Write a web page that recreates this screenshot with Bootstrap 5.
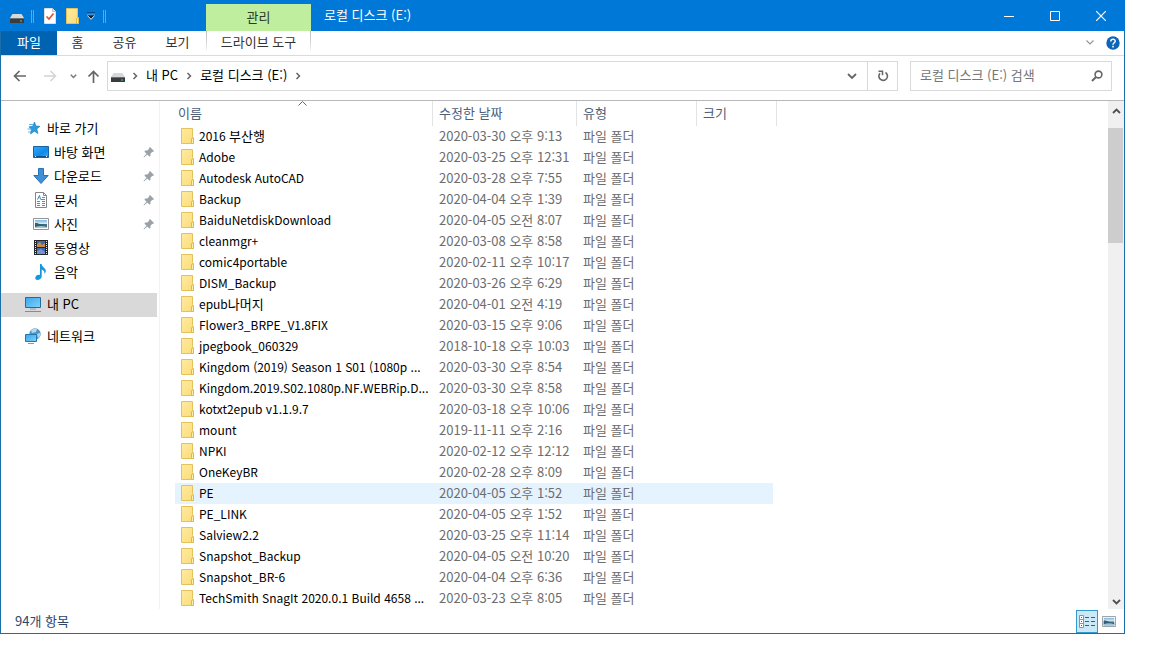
<!DOCTYPE html>
<html lang="ko">
<head>
<meta charset="utf-8">
<meta name="viewport" content="width=device-width, initial-scale=1">
<title>로컬 디스크 (E:)</title>
<link href="https://cdn.jsdelivr.net/npm/bootstrap@5.3.0/dist/css/bootstrap.min.css" rel="stylesheet">
<style>
body { font-family: "Noto Sans CJK KR", sans-serif; font-size: 13px; line-height: 20px; color: #000; background: #fff; }
button, input { font: inherit; }
button { background: none; border: 0; padding: 0; color: inherit; }
svg { display: block; flex: none; }
.explorer { margin-right: 27px; border: 1px solid #1a6fa8; border-top: 0; }
.titlebar { height: 31px; margin: 0 -1px; padding-left: 10px; background: #0078d7; color: #fff; }
.quick { width: 196px; height: 31px; padding-top: 1px; }
.sep { width: 3px; height: 13px; border: solid #5fa9e3; border-width: 0 1px; }
.tool-head { width: 105px; height: 27px; padding-bottom: 2px; background: #bfee9f; color: #2b3b25; }
.window-title { padding: 0 0 2px 13px; }
.caption-btn { width: 46px; height: 31px; }
.caption-btn:last-child { margin-right: 1px; }
.ribbon { height: 25px; border-bottom: 1px solid #dadbdc; color: #333; }
.ribbon button { height: 24px; padding-bottom: 2px; }
.tab-file { width: 56px; background: #0063b1; color: #fff; }
.tab-home { width: 41px; }
.tab-std { width: 53px; }
.tab-tool { width: 105px; margin-left: 2px; border: 1px solid; border-width: 0 1px !important; border-image: linear-gradient(#bbb, #ddd 60%, #fff 85%) 1; }
.navrow { height: 45px; padding: 5px 12px 9px 12px; border-bottom: 1px solid #b8b8b8; }
.navbtns { width: 94px; }
.boxed { height: 30px; border: 1px solid #d9d9d9; }
.crumb { padding: 0 8px 2px; }
.crumb-end { width: 30px; height: 28px; }
.crumb-end + .crumb-end { border-left: 1px solid #d9d9d9; }
.searchbox { width: 202px; margin-left: 12px; padding: 0 8px 0 9px; }
.searchbox input { border: 0; outline: 0; padding: 0 0 2px; min-width: 0; background: none; }
.searchbox input::placeholder { color: #767676; opacity: 1; }
.sidebar { width: 159px; border-right: 1px solid #f2f2f2; padding-top: 16px; }
.side-link { display: flex; align-items: center; height: 24px; margin-right: 2px; padding: 0 2px 2px 24px; gap: 6px; color: #000; text-decoration: none; }
.side-link.sub { padding-left: 32px; gap: 5px; }
.side-link.current { background: #d9d9d9; }
.group-gap { margin-top: 8px; }
.files { width: 602px; margin: 0 0 0 15px; table-layout: fixed; border-collapse: separate; border-spacing: 0; }
.files th { height: 25px; padding: 0 0 1px 6px; font-weight: 400; color: #4c607a; border-right: 1px solid #e3e3e3; vertical-align: middle; }
.files th:first-child { padding-left: 3px; position: relative; }
.sort-mark { position: absolute; top: 0; left: 123px; }
.files td { height: 21px; padding: 0 0 2px 6px; color: #6d6d6d; line-height: 18px; white-space: nowrap; }
.files td:first-child { color: #000; font-size: 12px; }
.hangul { font-size: 13px; }
.files td:last-child { border-right: 4px solid transparent; background-clip: padding-box; }
.files tr.hot td { background-color: #e5f3ff; }
.scrollbar { width: 16px; background: #f0f0f0; color: #505050; }
.scroll-up { height: 20px; }
.scroll-down { height: 15px; }
.thumb { height: 115px; margin-top: 7px; background: #cdcdcd; margin-right: 1px; }
.status { height: 24px; color: #2c4668; padding-left: 14px; }
.view-btn { width: 22px; height: 23px; }
.view-btn.active { border: 1px solid #3399cc; background: #cbe8f6; }
</style>
</head>
<body>
<svg width="0" height="0" class="position-absolute" aria-hidden="true">
  <defs>
    <linearGradient id="gFold" x2="1" y2="1"><stop stop-color="#ffeaa0"/><stop offset="1" stop-color="#fbdc78"/></linearGradient>
    <linearGradient id="gBlue" x2="1" y2="1"><stop stop-color="#35a8f5"/><stop offset=".6" stop-color="#1089e8"/><stop offset="1" stop-color="#35b0ff"/></linearGradient>
    <linearGradient id="gScr" x2="1" y2="1"><stop stop-color="#3ba6ea"/><stop offset="1" stop-color="#7fd2fb"/></linearGradient>
    <linearGradient id="gPhoto" x2="0" y2="1"><stop stop-color="#7fb4dc"/><stop offset=".45" stop-color="#d9ecf5"/><stop offset=".55" stop-color="#3c6b7c"/><stop offset="1" stop-color="#79a6bd"/></linearGradient>
  </defs>
  <symbol id="folder" viewBox="0 0 13 16"><path d="M.5.5h11v8l1 1v6H.5z" fill="url(#gFold)" stroke="#e3c25e"/><path d="M10.500 15.500v-4.500l1-1.500 1 1.500v4.500z" fill="#fff0a8" stroke="#dfb84c"/></symbol>
  <symbol id="drive" viewBox="0 0 14 9"><path d="M2.500 0h9L14 4H0z" fill="#d6d9dc"/><path d="M0 4h14v5H0z" fill="#3a3d40"/><path d="M0 4h14v1H0z" fill="#6d7174"/><path d="M10 6.500h2v1h-2z" fill="#3de06a"/></symbol>
  <symbol id="chev" viewBox="0 0 6 8"><path d="M1.500 1 4.500 4 1.500 7" fill="none" stroke="#666" stroke-width="1.500"/></symbol>
  <symbol id="pin" viewBox="0 0 12 12"><path d="M7 1 11 5 10 6 9.300 5.800 7.500 7.800 7.400 10 6.300 10.500 4.300 8.500 1 11.500.5 11 3.500 7.700 1.500 5.700 2 4.600 4.200 4.500 6.200 2.700 6 2z" fill="#9aa1a8"/></symbol>
  <symbol id="photo" viewBox="0 0 16 12"><path d="M.5.500h15v11H.5z" fill="#fff" stroke="#8f9599"/><path d="M2 2h12v8H2z" fill="url(#gPhoto)"/><path d="M2 5c4 0 6 2 12 3v2H2z" fill="#355e70"/><path d="M2 9q6-2 12 0v1H2z" fill="#9cc7d8"/></symbol>
</svg>

<div class="explorer">
  <header class="titlebar d-flex align-items-end">
    <div class="quick d-flex align-items-center">
      <svg width="14" height="9" class="mt-1"><use href="#drive"/></svg>
      <span class="sep" style="margin-left:7px"></span>
      <button type="button" aria-label="속성" style="margin-left:10px"><svg width="12" height="16" viewBox="0 0 12 16"><path d="M.5.500h8l3 3v12H.5z" fill="#fff" stroke="#d9dfe6"/><path d="M8.500.500v3h3" fill="#dfe5ea" stroke="#b9c2ca"/><path d="M2.500 8.500 5 11l4.500-5.500" fill="none" stroke="#e0532b" stroke-width="1.700"/></svg></button>
      <button type="button" aria-label="새 폴더" style="margin-left:10px"><svg width="13" height="16"><use href="#folder"/></svg></button>
      <button type="button" class="ms-2" aria-label="빠른 실행 도구 모음 사용자 지정"><svg width="8" height="8" viewBox="0 0 8 8"><path d="M0 1h8" stroke="#0b1c2e"/><path d="M0 2h8" stroke="#9fccee" stroke-width=".7"/><path d="M0 3.500h8L4 7.800z" fill="#fff"/><path d="M.6 3.300h6.800L4 6.800z" fill="#0b1c2e"/></svg></button>
      <span class="sep ms-2"></span>
    </div>
    <div class="tool-head d-flex align-items-center justify-content-center">관리</div>
    <div class="window-title align-self-center flex-grow-1">로컬 디스크 (E:)</div>
    <button type="button" class="caption-btn d-flex align-items-center justify-content-center" aria-label="최소화"><svg width="10" height="10"><path d="M0 5.500h10" stroke="#fff"/></svg></button>
    <button type="button" class="caption-btn d-flex align-items-center justify-content-center" aria-label="최대화"><svg width="10" height="10"><path d="M.5.500h9v9h-9z" fill="none" stroke="#fff"/></svg></button>
    <button type="button" class="caption-btn d-flex align-items-center justify-content-center" aria-label="닫기"><svg width="10" height="10"><path d="M0 0l10 10M10 0L0 10" stroke="#fff" stroke-width="1.200"/></svg></button>
  </header>

  <nav class="ribbon d-flex">
    <button type="button" class="tab-file">파일</button>
    <button type="button" class="tab-home">홈</button>
    <button type="button" class="tab-std">공유</button>
    <button type="button" class="tab-std">보기</button>
    <button type="button" class="tab-tool">드라이브 도구</button>
    <div class="ms-auto d-flex align-items-center gap-2 pe-1">
      <button type="button" aria-label="리본 확장" class="d-flex align-items-center me-1"><svg width="8" height="5"><path d="M.5.500l3.500 3.500 3.500-3.500" fill="none" stroke="#8d9297" stroke-width="1.100"/></svg></button>
      <button type="button" aria-label="도움말" class="d-flex align-items-center p-0"><svg width="14" height="14" viewBox="0 0 14 14"><circle cx="7" cy="7" r="6.700" fill="#0e65b5"/><path d="M4.800 5.400C4.800 2.500 9.300 2.600 9.200 5.200 9.200 6.800 7 6.700 7 8.700M7 9.800v1.600" fill="none" stroke="#fff" stroke-width="1.500"/></svg></button>
    </div>
  </nav>

  <div class="navrow d-flex">
    <div class="navbtns d-flex align-items-center">
      <button type="button" aria-label="뒤로"><svg width="14" height="12"><path d="M13 6H1.500M6.500 1l-5 5 5 5" fill="none" stroke="#666" stroke-width="1.700"/></svg></button>
      <button type="button" aria-label="앞으로" class="ms-3"><svg width="14" height="12"><path d="M1 6h11.500M7.500 1l5 5-5 5" fill="none" stroke="#d4d4d4" stroke-width="1.500"/></svg></button>
      <button type="button" aria-label="최근 위치" style="margin-left:13px"><svg width="7" height="5"><path d="M.8.800l2.700 2.700L6.200.800" fill="none" stroke="#777" stroke-width="1.500"/></svg></button>
      <button type="button" aria-label="위로" style="margin-left:10px"><svg width="13" height="13"><path d="M6.500 13V1.500M1.500 6.500l5-5 5 5" fill="none" stroke="#666" stroke-width="1.700"/></svg></button>
    </div>
    <div class="boxed d-flex align-items-center flex-grow-1">
      <svg width="14" height="9" style="margin:2px 7px 0 3px"><use href="#drive"/></svg>
      <svg width="6" height="8"><use href="#chev"/></svg>
      <button type="button" class="crumb">내 PC</button>
      <svg width="6" height="8"><use href="#chev"/></svg>
      <button type="button" class="crumb">로컬 디스크 (E:)</button>
      <svg width="6" height="8"><use href="#chev"/></svg>
      <button type="button" class="crumb-end d-flex align-items-center justify-content-center ms-auto" aria-label="이전 위치"><svg width="10" height="7"><path d="M1 1l4 4 4-4" fill="none" stroke="#666" stroke-width="1.800"/></svg></button>
      <button type="button" class="crumb-end d-flex align-items-center justify-content-center" aria-label="새로 고침"><svg width="12" height="12" viewBox="0 0 12 12"><path d="M8.500 2.500A4.300 4.300 0 1 1 3 3.200" fill="none" stroke="#666" stroke-width="1.600"/><path d="M1.500 1.200h4v4" fill="none" stroke="#666" stroke-width="1.500"/></svg></button>
    </div>
    <div class="searchbox boxed d-flex align-items-center">
      <input type="search" class="flex-grow-1" placeholder="로컬 디스크 (E:) 검색" aria-label="로컬 디스크 (E:) 검색">
      <svg width="12" height="12"><circle cx="7.500" cy="4.500" r="3.400" fill="none" stroke="#666" stroke-width="1.600"/><path d="M5 7 1 11" stroke="#666" stroke-width="2"/></svg>
    </div>
  </div>

  <main class="d-flex">
    <nav class="sidebar flex-shrink-0" aria-label="탐색 창">
      <a href="#" class="side-link"><svg width="16" height="14" viewBox="0 0 16 14"><path d="M9.500 1 10.900 5 15 5.300 11.800 8 13 12.500 9.300 10.200 5.500 13 6.400 8.700 4 5.800 7.700 5.300z" fill="#2b9be0" stroke="#1b76bd" stroke-width=".6"/><path d="M4 3.500h4M2.500 8h4M3 11h3" stroke="#5bb5ea"/></svg>바로 가기</a>
      <a href="#" class="side-link sub"><svg width="16" height="12"><path d="M.5.500h15v11H.5z" fill="url(#gBlue)" stroke="#15639f"/><path d="M1 10.500h14" stroke="#0d528a"/><path d="M2 10.500h1m10 0h1" stroke="#fff"/></svg>바탕 화면<svg class="ms-auto" width="12" height="12"><use href="#pin"/></svg></a>
      <a href="#" class="side-link sub"><svg width="16" height="16"><path d="M5.500.500h5v7h4.700L8 15.500.8 7.500h4.700z" fill="#3f8fd9" stroke="#2b72b5"/></svg>다운로드<svg class="ms-auto" width="12" height="12"><use href="#pin"/></svg></a>
      <a href="#" class="side-link sub"><svg width="16" height="16"><path d="M2.500.500h8l3 3v12h-11z" fill="#fff" stroke="#7f878c"/><path d="M10.500.500v3h3" fill="none" stroke="#7f878c"/><path d="M4 9.500h3m2 0h3M4 11.500h3m2 0h3M4 13.500h3m2 0h3M8 7.500h4M9 5.500h3" stroke="#4f91bd"/><path d="M4.500 7.500 6.500 3.500 7.500 7.500" fill="none" stroke="#2f86c2"/></svg>문서<svg class="ms-auto" width="12" height="12"><use href="#pin"/></svg></a>
      <a href="#" class="side-link sub"><svg width="16" height="12"><use href="#photo"/></svg>사진<svg class="ms-auto" width="12" height="12"><use href="#pin"/></svg></a>
      <a href="#" class="side-link sub"><svg width="16" height="16"><path d="M1 0h14v15H1z" fill="#252729"/><path d="M2.500 1v14M13.500 1v14" stroke="#e8e8e8" stroke-dasharray="1 1"/><path d="M4 1h8v6H4zM4 8h8v6H4z" fill="#3f69b5"/><path d="M4 4l3-2 2 3 3-2v4H4z" fill="#d08a3d"/><path d="M4 11l4-2 4 3v2H4z" fill="#7794cf"/></svg>동영상</a>
      <a href="#" class="side-link sub"><svg width="16" height="16"><path d="M7 0h1.500c.5 3 4 4 4.300 6.500 0 1.500-.5 2.700-1.500 3.500.8-2.500-.8-3.700-2.600-4.500v7C8.500 14.500 6.500 16 4.500 16S1.800 14.500 2.500 13 5 10.500 7 11z" fill="#1796e0"/></svg>음악</a>
      <a href="#" class="side-link current group-gap"><svg width="16" height="15" viewBox="0 0 16 15"><path d="M.5.500h15v10H.5z" fill="url(#gScr)" stroke="#1f6ca3"/><path d="M5 12h6" stroke="#7ba6c4"/><path d="M0 14.500h16" stroke="#6f93b5"/></svg>내 PC</a>
      <a href="#" class="side-link group-gap"><svg width="16" height="16"><circle cx="10" cy="6" r="5.700" fill="#4e96c8"/><path d="M6 2.500q3-3 6-1.500L11 4l-4 1zM12 6l3-1q1 3-2 5z" fill="#b7d9ea"/><path d="M.5 6.500h11v7H.5z" fill="url(#gScr)" stroke="#2277ae"/><path d="M3 15.500h6" stroke="#6aa4ca"/></svg>네트워크</a>
    </nav>
    <section class="flex-grow-1">
      <table class="files">
        <colgroup><col style="width:258px"><col style="width:144px"><col style="width:120px"><col style="width:80px"></colgroup>
        <thead><tr><th scope="col">이름<svg class="sort-mark" width="9" height="5"><path d="M.5 4.500l4-4 4 4" fill="none" stroke="#666"/></svg></th><th scope="col">수정한 날짜</th><th scope="col">유형</th><th scope="col">크기</th></tr></thead>
        <tbody id="rows"></tbody>
      </table>
    </section>
    <div class="scrollbar d-flex flex-column">
      <button type="button" class="scroll-up d-flex align-items-center justify-content-center" aria-label="위로 스크롤"><svg width="9" height="6"><path d="M1 5l3.500-3.500L8 5" fill="none" stroke="#505050" stroke-width="1.800"/></svg></button>
      <div class="thumb"></div>
      <button type="button" class="scroll-down d-flex align-items-center justify-content-center mt-auto" aria-label="아래로 스크롤"><svg width="9" height="6"><path d="M1 1l3.500 3.500L8 1" fill="none" stroke="#505050" stroke-width="1.800"/></svg></button>
    </div>
  </main>

  <footer class="status d-flex align-items-center">
    <span>94개 항목</span>
    <div class="ms-auto d-flex align-self-end pe-1">
      <button type="button" class="view-btn active d-flex align-items-center justify-content-center" aria-label="자세히"><svg width="17" height="13"><path d="M.5.500h4v12h-4zM0 4.500h5M0 8.500h5" fill="#fff" stroke="#8d9499"/><path d="M2 2.500h1M2 6.500h1M2 10.500h1M6 2.500h4m2 0h4M6 6.500h4m2 0h4M6 10.500h4m2 0h4" stroke="#4d5a63"/></svg></button>
      <button type="button" class="view-btn d-flex align-items-center justify-content-center" aria-label="큰 아이콘"><svg width="14" height="11" viewBox="0 0 16 12" preserveAspectRatio="none"><use href="#photo" width="16" height="12"/></svg></button>
    </div>
  </footer>
</div>

<script>
const folders = [
  ["2016 부산행", "2020-03-30 오후 9:13"],
  ["Adobe", "2020-03-25 오후 12:31"],
  ["Autodesk AutoCAD", "2020-03-28 오후 7:55"],
  ["Backup", "2020-04-04 오후 1:39"],
  ["BaiduNetdiskDownload", "2020-04-05 오전 8:07"],
  ["cleanmgr+", "2020-03-08 오후 8:58"],
  ["comic4portable", "2020-02-11 오후 10:17"],
  ["DISM_Backup", "2020-03-26 오후 6:29"],
  ["epub나머지", "2020-04-01 오전 4:19"],
  ["Flower3_BRPE_V1.8FIX", "2020-03-15 오후 9:06"],
  ["jpegbook_060329", "2018-10-18 오후 10:03"],
  ["Kingdom (2019) Season 1 S01 (1080p ...", "2020-03-30 오후 8:54"],
  ["Kingdom.2019.S02.1080p.NF.WEBRip.D...", "2020-03-30 오후 8:58"],
  ["kotxt2epub v1.1.9.7", "2020-03-18 오후 10:06"],
  ["mount", "2019-11-11 오후 2:16"],
  ["NPKI", "2020-02-12 오후 12:12"],
  ["OneKeyBR", "2020-02-28 오후 8:09"],
  ["PE", "2020-04-05 오후 1:52"],
  ["PE_LINK", "2020-04-05 오후 1:52"],
  ["Salview2.2", "2020-03-25 오후 11:14"],
  ["Snapshot_Backup", "2020-04-05 오전 10:20"],
  ["Snapshot_BR-6", "2020-04-04 오후 6:36"],
  ["TechSmith SnagIt 2020.0.1 Build 4658 ...", "2020-03-23 오후 8:05"]
];
const sized = name => name.replace(/[가-힣]+/g, '<span class="hangul">$&</span>');
document.getElementById("rows").innerHTML = folders.map(([name, date]) =>
  `<tr class="${name === "PE" ? "hot" : ""}"><td><div class="d-flex align-items-center"><svg width="13" height="16" style="margin-right:5px"><use href="#folder"/></svg><span>${sized(name)}</span></div></td><td>${date}</td><td>파일 폴더</td><td></td></tr>`).join("");
</script>
<script src="https://cdn.jsdelivr.net/npm/bootstrap@5.3.0/dist/js/bootstrap.bundle.min.js"></script>
</body>
</html>
